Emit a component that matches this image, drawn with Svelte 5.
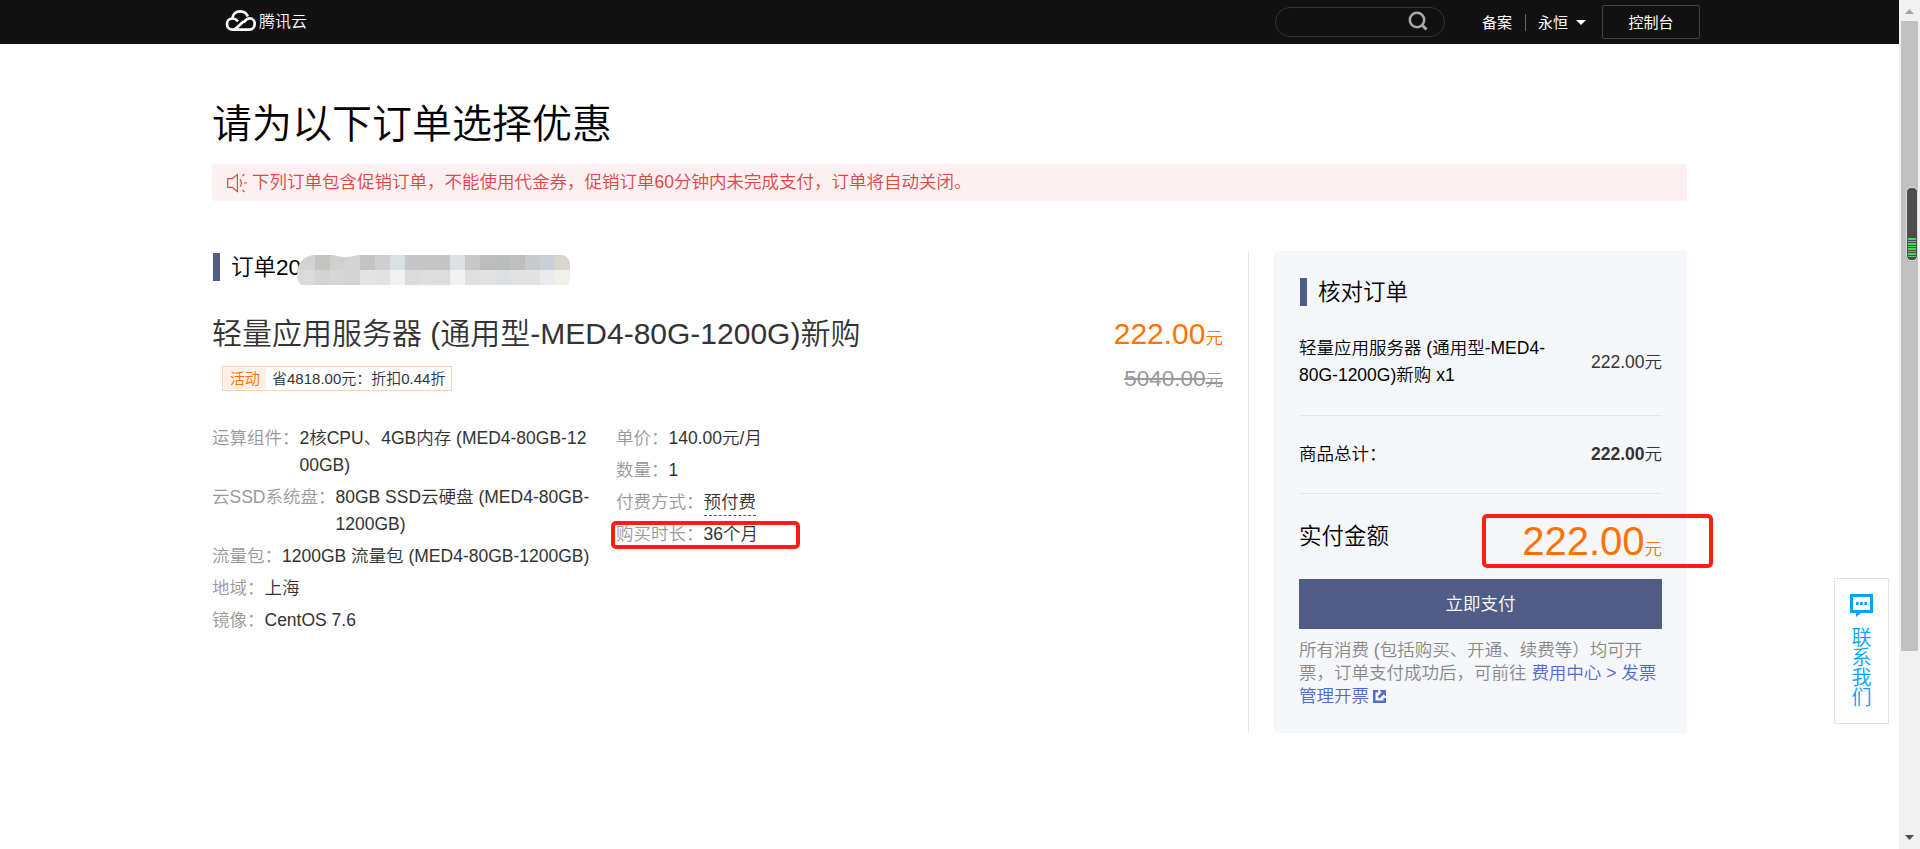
<script>
	const specs = [
		{ label: '运算组件', lines: ['2核CPU、4GB内存 (MED4-80GB-12', '00GB)'] },
		{ label: '云SSD系统盘', lines: ['80GB SSD云硬盘 (MED4-80GB-', '1200GB)'] },
		{ label: '流量包', lines: ['1200GB 流量包 (MED4-80GB-1200GB)'] },
		{ label: '地域', lines: ['上海'] },
		{ label: '镜像', lines: ['CentOS 7.6'] }
	];

	const billing = [
		{ label: '单价', value: '140.00元/月' },
		{ label: '数量', value: '1' },
		{ label: '付费方式', value: '预付费', hint: true },
		{ label: '购买时长', value: '36个月', marked: true }
	];

	// hidden part of the order number, two rows of blocks
	const mosaic = [
		['#d2d3d5', '#c4c5c0', '#d0d0d0', '#d3d3d3', '#c4c4c5', '#d0cfcd', '#dadfe2', '#c6c6c8', '#c6c6c6', '#c5c5c8', '#dce1e4', '#c8c8c8', '#bdbdbd', '#bbbcbc', '#bfbfbf', '#c9cacb', '#ccd0d6', '#d8d6cf', '#c9cacf', '#e2e4e4'],
		['#dadada', '#d3d3d4', '#d6d6d6', '#d4d4d4', '#e4e4e5', '#e2e2e2', '#f0f2f2', '#dadada', '#dddddb', '#dcdcdc', '#f1f2f4', '#dfdfe0', '#e3e2e2', '#dddfe1', '#dfe1e3', '#e4e2e0', '#e9ebee', '#f0efea', '#e9eaec', '#f2f2f2']
	];
	const cellX = (i) => (i === 0 ? 0 : 18 + (i - 1) * 15);
</script>

<header class="topbar">
	<div class="logo">
		<svg width="31" height="24" viewBox="0 0 31 24" fill="none" stroke="#fff" stroke-width="2.7">
			<path d="M7.2 10.2C7.3 5.2 10.8 2.3 15.2 2.3c3.7 0 6.4 1.9 7.6 5.2" />
			<path d="M18.5 13.4c2-2.2 3.6-4 6.2-4 2.8 0 5 2.2 5 5.2 0 3.600-2.300 6.100-5.500 6.100H9.500L18.500 12.400" />
			<path d="M13 12.400c-1.800-1.900-3.200-2.900-5.300-2.900-3.300 0-5.700 2.300-5.700 5.500 0 3.300 2.400 5.700 5.700 5.700h2.500" />
		</svg>
		<span>腾讯云</span>
	</div>
	<div class="search">
		<svg width="20" height="20" viewBox="0 0 20 20" fill="none" stroke="#aaa" stroke-width="2.5">
			<circle cx="9" cy="9" r="7.2" />
			<path d="M14 14l4.500 4.500" stroke-width="3" />
		</svg>
	</div>
	<span class="filing">备案</span>
	<span class="sep"></span>
	<span class="user">永恒</span>
	<svg class="caret" width="10" height="5" viewBox="0 0 10 5"><path d="M0 0h10L5 5z" fill="#fff" /></svg>
	<button class="console">控制台</button>
</header>

<main>
	<h1>请为以下订单选择优惠</h1>
	<div class="alert">
		<svg width="21" height="20" viewBox="0 0 21 20" fill="none" stroke="#e54545" stroke-width="1.2">
			<path d="M.7 5.600h4.600L10.400 1.500v17L5.300 14.400H.7z" />
			<path d="M13 6.500q3 3.500 0 7M15.500 3l2-2M17 10h3M15.500 17l2 2" />
		</svg>
		<span>下列订单包含促销订单，不能使用代金券，促销订单60分钟内未完成支付，订单将自动关闭。</span>
	</div>

	<div class="columns">
		<section class="order">
			<h2>
				订单20
				<svg class="mosaic" width="273" height="30" viewBox="0 0 273 30">
					<clipPath id="blob"><path d="M0 20Q0 8 8 3Q12 0 18 0H36Q48 4 61 0H265Q273 2 273 9V25Q273 30 267 30H6Q1 30 0 20z" /></clipPath>
					<g clip-path="url(#blob)" shape-rendering="crispEdges">
						{#each mosaic as row, r}
							{#each row as color, i}
								<rect x={cellX(i)} y={r * 15} width="18" height="15" fill={color} />
							{/each}
						{/each}
					</g>
				</svg>
			</h2>
			<div class="product">
				<h3>轻量应用服务器 (通用型-MED4-80G-1200G)新购</h3>
				<div class="price">222.00<small>元</small></div>
			</div>
			<div class="promo">
				<div class="tag"><b>活动</b><span>省4818.00元：折扣0.44折</span></div>
				<div class="old"><s>5040.00<small>元</small></s></div>
			</div>
			<div class="details">
				<dl class="specs">
					{#each specs as { label, lines }}
						<div class="row">
							<dt>{label}：</dt>
							<dd>{#each lines as line}<div>{line}</div>{/each}</dd>
						</div>
					{/each}
				</dl>
				<dl>
					{#each billing as { label, value, hint, marked }}
						<div class="row" class:marked>
							<dt>{label}：</dt>
							<dd><span class:hint>{value}</span></dd>
						</div>
					{/each}
				</dl>
			</div>
		</section>

		<aside>
			<h2>核对订单</h2>
			<div class="item">
				<p>轻量应用服务器 (通用型-MED4-<br />80G-1200G)新购 x1</p>
				<span>222.00元</span>
			</div>
			<div class="total">
				<p>商品总计：</p>
				<span><b>222.00</b>元</span>
			</div>
			<div class="pay">
				<p>实付金额</p>
				<div class="amount">222.00<small>元</small></div>
			</div>
			<button class="submit">立即支付</button>
			<p class="notice">
				所有消费 (包括购买、开通、续费等）均可开<br />票，订单支付成功后，可前往 <a href="#invoice">费用中心 &gt; 发票<br />管理开票<svg width="13" height="13" viewBox="0 0 13 13"><path d="M0 0h5v2.500H2.500v8h8V8H13v5H0zM6.500 0H13v6.500l-2.200-2.200L6.500 8.600 4.600 6.700l4.200-4.400z" fill="#506bd0" /></svg></a>
			</p>
		</aside>
	</div>
</main>

<div class="contact">
	<svg width="23" height="23" viewBox="0 0 23 23">
		<path d="M0 0h23v19H11l-5 4v-4H0z" fill="#00a4ff" />
		<path d="M3 3h17v13H3z" fill="#fff" />
		<path d="M6 8h2.600v3H6zM10.200 8h2.600v3h-2.600zM14.400 8H17v3h-2.600z" fill="#00a4ff" />
	</svg>
	<span>联系我们</span>
</div>

<div class="scrollbar">
	<svg width="9" height="5" viewBox="0 0 9 5"><path d="M0 5L4.500 0 9 5z" fill="#a3a3a3" /></svg>
	<div class="thumb"></div>
	<svg class="down" width="9" height="5" viewBox="0 0 9 5"><path d="M0 0h9L4.500 5z" fill="#505050" /></svg>
	<div class="meter"><i></i></div>
</div>

<style>
	:global(body) { background: #fff; overflow: hidden; }
	:global(#app) {
		position: relative; height: 849px; overflow: hidden;
		font: 350 17.5px/27px "Liberation Sans", "Noto Sans CJK SC", sans-serif; color: #333;
	}
	h1, h2, h3, p, dl, dd { margin: 0; font-weight: inherit; }
	button { font: inherit; padding: 0; }
	svg { flex: none; }

	.topbar {
		display: flex; align-items: center; box-sizing: border-box;
		width: 1899px; height: 44px; padding-left: 225px; background: #111; color: #fff; font-size: 15px;
	}
	.logo { display: flex; align-items: center; width: 1050px; gap: 3px; font-size: 16px; }
	.logo svg { margin-top: -2px; }
	.logo span { margin-top: -2px; }
	.search {
		display: flex; align-items: center; justify-content: flex-end; box-sizing: border-box;
		width: 170px; height: 30px; padding-right: 16px; border: 1px solid #333; border-radius: 15px;
	}
	.search svg { margin-top: -2px; }
	.filing { margin-left: 37px; font-weight: 400; }
	.sep { width: 1px; height: 17px; margin: 0 12px 0 13px; background: #666; }
	.user { font-weight: 400; }
	.caret { margin-left: 8px; }
	.console {
		width: 98px; height: 34px; margin-left: 16px; background: none;
		border: 1px solid #444; border-radius: 2px; color: #fff; font-weight: 400;
	}

	main { width: 1475px; margin-left: 212px; padding-top: 50px; }
	h1 { font-size: 40px; line-height: 60px; color: #000; }
	.alert {
		display: flex; align-items: center; box-sizing: border-box;
		height: 37px; margin-top: 10px; padding-left: 15px; border-radius: 3px;
		background: #fcf0f2; color: #e54545;
	}
	.alert span { margin-left: 4px; }

	.columns { display: flex; height: 482px; margin-top: 50px; }
	.order { box-sizing: border-box; width: 1037px; padding-right: 25px; border-right: 1px solid #e3e5ea; }
	h2 {
		position: relative; display: flex; align-items: center; height: 28px; margin-left: 1px;
		font-size: 22.5px; color: #000;
	}
	h2::before { content: ""; width: 7px; height: 28px; margin-right: 11px; background: #525d87; }
	.order h2 { margin-top: 2px; }
	.mosaic { position: absolute; left: 84px; top: 2px; }

	.product { display: flex; justify-content: space-between; height: 45px; margin-top: 30px; line-height: 45px; white-space: nowrap; }
	h3 { font-size: 30px; }
	small { font-size: 17.5px; line-height: 1; }
	.price { font-size: 30px; color: #ff7200; }
	.promo { display: flex; justify-content: space-between; align-items: center; height: 45px; }
	.tag {
		display: flex; box-sizing: border-box; height: 25px; margin-left: 10px; padding: 1px 6px 1px 1px;
		border: 1px solid #ffd0aa; font-size: 15px; line-height: 21px;
	}
	.tag b { padding: 0 6px; margin-right: 6px; background: #fff0e6; color: #ff7200; font-weight: inherit; }
	.old { font-size: 22.5px; color: #999; }

	.details { display: flex; margin-top: 24px; white-space: nowrap; }
	.specs { width: 404px; }
	.row { position: relative; display: flex; margin-bottom: 5px; }
	dt { color: #999; }
	.hint { display: block; box-sizing: border-box; height: 27px; border-bottom: 1px dashed #555; }
	.marked::after {
		content: ""; position: absolute; left: -5px; top: 0; box-sizing: border-box;
		width: 189px; height: 28px; border: 4px solid #ff1f12; border-radius: 5px;
	}

	aside { box-sizing: border-box; width: 413px; height: 482px; margin-left: 25px; padding: 27px 25px 0; background: #f5f7fb; }
	.item, .total, .pay { display: flex; align-items: center; justify-content: space-between; box-sizing: border-box; }
	.item { height: 110px; padding-top: 3px; border-bottom: 1px solid #e3e5ea; }
	.item p, .total p, .pay p { color: #000; }
	.total { height: 78px; border-bottom: 1px solid #e3e5ea; }
	.total b { font-weight: 700; }
	.pay { position: relative; height: 85px; }
	.pay p { font-size: 22.5px; }
	.amount { padding-top: 8px; font-size: 40px; line-height: 50px; color: #ff7200; }
	.pay::after {
		content: ""; position: absolute; left: 183px; top: 20px; box-sizing: border-box;
		width: 231px; height: 54px; border: 4px solid #ff1f12; border-radius: 5px;
	}
	.submit { display: block; width: 363px; height: 50px; border: 0; background: #525d87; color: #fff; }
	.notice { margin-top: 10px; line-height: 23px; color: #888; white-space: nowrap; }
	.notice a { color: #506bd0; text-decoration: none; }
	.notice svg { margin-left: 4px; vertical-align: -1px; }

	.contact {
		position: absolute; left: 1834px; top: 578px; box-sizing: border-box; width: 55px; height: 146px;
		display: flex; flex-direction: column; align-items: center;
		padding-top: 15px; border: 1px solid #dfe5ee; color: #00a4ff;
	}
	.contact span { width: 20px; margin-top: 11px; font-size: 20px; line-height: 20px; }

	.scrollbar {
		position: absolute; right: 0; top: 0; box-sizing: border-box; width: 21px; height: 849px;
		display: flex; flex-direction: column; align-items: center; padding: 9px 1px 9px 0; background: #f1f1f1;
	}
	.thumb { width: 17px; height: 630px; margin: 7px 0 auto 1px; background: #c1c1c1; }
	.meter {
		position: absolute; left: 7px; top: 187px; box-sizing: border-box; width: 12px; height: 74px;
		padding: 50px 1px 0; border: 1px solid #ddd; border-radius: 5px; background: #4d4d4d;
	}
	.meter i { display: block; height: 20px; background: repeating-linear-gradient(#3ddc68 0 2px, #4d4d4d 2px 3px, #3ddc68 3px 4px, #4d4d4d 4px 5px); }
</style>
